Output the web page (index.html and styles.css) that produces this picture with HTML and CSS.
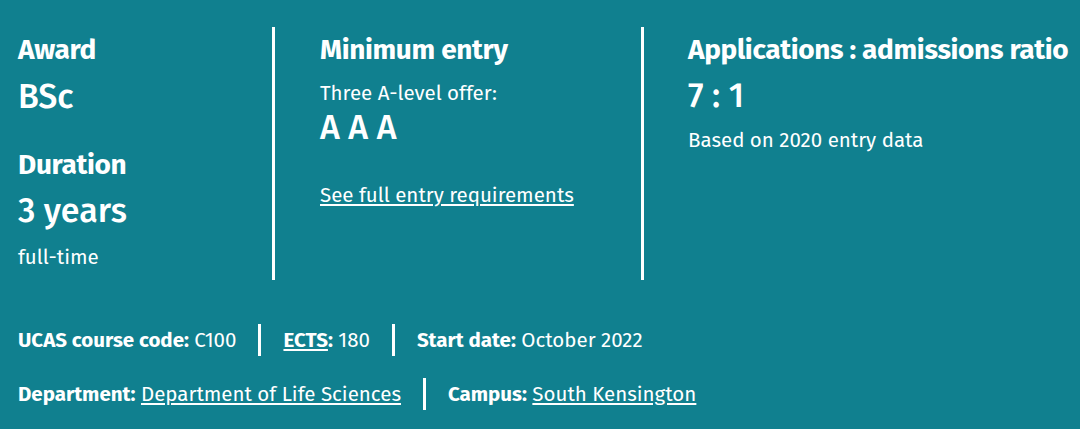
FILE: index.html
```html
<!DOCTYPE html>
<html lang="en">
<head>
<meta charset="utf-8">
<title>Course key information</title>
<link rel="stylesheet" href="styles.css">
</head>
<body>
<main class="course">
  <section class="stats">
    <div class="stat stat-award">
      <h3 class="stat-title">Award</h3>
      <p class="stat-value stat-value-first">BSc</p>
      <h3 class="stat-title stat-title-second">Duration</h3>
      <p class="stat-value stat-value-duration">3 years</p>
      <p class="stat-note stat-note-after">full-time</p>
    </div>
    <div class="stat stat-entry">
      <h3 class="stat-title">Minimum entry</h3>
      <p class="stat-note stat-note-lead">Three A-level offer:</p>
      <p class="stat-value stat-value-grades">A A A</p>
      <p class="stat-note stat-link-wrap"><a href="#" class="stat-link">See full entry requirements</a></p>
    </div>
    <div class="stat stat-ratio">
      <h3 class="stat-title">Applications : admissions ratio</h3>
      <p class="stat-value stat-value-ratio">7 : 1</p>
      <p class="stat-note stat-note-ratio">Based on 2020 entry data</p>
    </div>
  </section>
  <section class="meta">
    <div class="meta-row">
      <span class="meta-item"><strong>UCAS course code:</strong> C100</span>
      <span class="meta-sep"></span>
      <span class="meta-item"><strong><a href="#" class="meta-link">ECTS</a>:</strong> 180</span>
      <span class="meta-sep"></span>
      <span class="meta-item"><strong>Start date:</strong> October 2022</span>
    </div>
    <div class="meta-row">
      <span class="meta-item"><strong>Department:</strong> <a href="#" class="meta-link">Department of Life Sciences</a></span>
      <span class="meta-sep"></span>
      <span class="meta-item"><strong>Campus:</strong> <a href="#" class="meta-link">South Kensington</a></span>
    </div>
  </section>
</main>
</body>
</html>
```

FILE: styles.css
```css
html, body {
  margin: 0;
  padding: 0;
}

body {
  background: #10808f;
  color: #ffffff;
  font-family: "Fira Sans", "Open Sans", "Noto Sans", sans-serif;
  width: 1080px;
  height: 429px;
  overflow: hidden;
}

.course {
  display: flex;
  flex-direction: column;
}

.stats {
  display: flex;
  margin-top: 27px;
  height: 253px;
}

.stat {
  box-sizing: border-box;
  height: 100%;
  padding-top: 6px;
}

.stat-award {
  width: 275px;
  padding-left: 18px;
  border-right: 3px solid #ffffff;
}

.stat-entry {
  width: 369px;
  padding-left: 45px;
  border-right: 3px solid #ffffff;
}

.stat-ratio {
  flex: 1;
  padding-left: 44px;
}

.stat-title,
.stat-value,
.stat-note {
  margin: 0;
}

.stat-title {
  font-size: 28px;
  line-height: 34px;
  font-weight: 700;
  letter-spacing: -0.35px;
  white-space: nowrap;
}

.stat-title-second {
  margin-top: 30px;
}

.stat-value {
  font-size: 34px;
  line-height: 42px;
  font-weight: 500;
}

.stat-value-first {
  margin-top: 9px;
}

.stat-value-duration {
  margin-top: 8px;
}

.stat-value-grades {
  margin-top: 0;
}

.stat-value-ratio {
  margin-top: 8px;
}

.stat-note {
  font-size: 20.5px;
  line-height: 28px;
  font-weight: 400;
}

.stat-note-after {
  margin-top: 11px;
}

.stat-note-lead {
  margin-top: 12px;
}

.stat-note-ratio {
  margin-top: 9px;
}

.stat-link-wrap {
  margin-top: 32px;
}

.stat-link,
.meta-link {
  color: #ffffff;
  text-decoration: underline;
  text-decoration-thickness: 1.5px;
  text-underline-offset: 2px;
}

.meta {
  display: flex;
  flex-direction: column;
  gap: 22px;
  margin-top: 44px;
  padding-left: 18px;
}

.meta-row {
  display: flex;
  align-items: center;
  height: 32px;
  font-size: 20.5px;
}

.meta-item strong {
  font-weight: 700;
}

.meta-sep {
  width: 3px;
  height: 32px;
  background: #ffffff;
  margin: 0 22px;
}
```
